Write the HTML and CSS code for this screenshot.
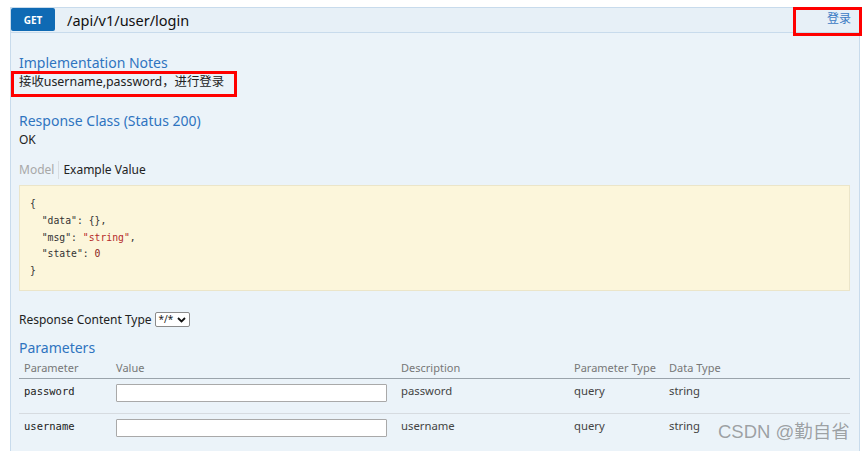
FILE: index.html
```html
<!DOCTYPE html>
<html lang="zh-CN">
<head>
<meta charset="utf-8">
<title>/api/v1/user/login</title>
<link rel="stylesheet" href="styles.css">
</head>
<body>
<div class="op">
  <div class="heading">
    <span class="method">GET</span>
    <span class="path">/api/v1/user/login</span>
    <a class="summary">登录</a>
  </div>
  <div class="content">
    <h4 class="h4">Implementation Notes</h4>
    <p class="text notes">接收username,password，进行登录</p>
    <h4 class="h4 gap-lg">Response Class (Status 200)</h4>
    <p class="text">OK</p>
    <div class="tabs"><span class="tab off">Model</span><span class="tab on">Example Value</span></div>
    <pre class="snippet"><span class="line">{</span>
<span class="line">  <span class="k">"data"</span>: {},</span>
<span class="line">  <span class="k">"msg"</span>: <span class="s">"string"</span>,</span>
<span class="line">  <span class="k">"state"</span>: <span class="n">0</span></span>
<span class="line">}</span></pre>
    <div class="rct">Response Content Type <span class="select"><span class="sel-val">*/*</span><svg class="chev" width="9" height="6" viewBox="0 0 9 6"><path d="M1 1 L4.5 4.5 L8 1" fill="none" stroke="#111" stroke-width="1.8"/></svg></span></div>
    <h4 class="h4 gap-sm">Parameters</h4>
    <table class="params">
      <colgroup><col class="c1"><col class="c2"><col class="c3"><col class="c4"><col class="c5"></colgroup>
      <thead>
        <tr><th>Parameter</th><th>Value</th><th>Description</th><th>Parameter Type</th><th>Data Type</th></tr>
      </thead>
      <tbody>
        <tr><td class="code">password</td><td><span class="input"></span></td><td>password</td><td>query</td><td>string</td></tr>
        <tr><td class="code">username</td><td><span class="input"></span></td><td>username</td><td>query</td><td>string</td></tr>
      </tbody>
    </table>
  </div>
  <div class="mark mark-login"></div>
  <div class="mark mark-notes"></div>
</div>
<div class="watermark">CSDN @勤自省</div>
</body>
</html>
```
FILE: styles.css
```css
html, body {
  margin: 0;
  padding: 0;
  background: #fff;
  height: 451px;
  overflow: hidden;
}
body {
  font-family: "Noto Sans", "Noto Sans CJK SC", sans-serif;
  color: #222;
  position: relative;
}
.op {
  position: relative;
  margin: 7px 0 0 10px;
  width: 850px;
}
.heading {
  display: flex;
  align-items: flex-start;
  height: 24px;
  background: #e7f0f7;
  border: 1px solid #c8dbec;
}
.method {
  width: 44px;
  height: 23px;
  line-height: 24px;
  background: #0f6ab4;
  color: #fff;
  font-size: 10px;
  font-weight: bold;
  text-align: center;
  border-radius: 2px;
}
.path {
  margin-left: 12px;
  font-size: 14.5px;
  line-height: 24px;
  color: #111;
}
.summary {
  margin-left: auto;
  margin-right: 8px;
  font-size: 12px;
  line-height: 22px;
  color: #3b7bc4;
}
.content {
  background: #ebf3f9;
  border: 1px solid #c8dbec;
  border-top: none;
  padding: 20px 8px 4px 8px;
}
.h4 {
  margin: 0;
  font-size: 14px;
  line-height: 20px;
  font-weight: normal;
  color: #2f74c0;
}
.gap-lg { margin-top: 20px; }
.gap-sm { margin-top: 8px; }
.text {
  margin: 0;
  font-size: 12px;
  line-height: 18px;
  color: #222;
}
.text.notes { font-size: 12.4px; }
.tabs {
  margin-top: 12px;
  display: flex;
  font-size: 12px;
  line-height: 18px;
}
.tab.off { color: #a8a8a8; padding-right: 4px; }
.tab.on {
  color: #222;
  border-left: 1px solid #d8dde2;
  padding-left: 4px;
}
.snippet {
  margin: 6px 1px 0 0;
  background: #fcf6db;
  border: 1px solid #ebe5c9;
  padding: 10px 10px;
  font-family: "DejaVu Sans Mono", monospace;
  font-size: 9.75px;
  line-height: 16.75px;
  color: #333;
}
.snippet .line { display: inline-block; height: 16.75px; }
.snippet .s { color: #b52a2a; }
.snippet .n { color: #8a1c1c; }
.rct {
  margin-top: 19px;
  font-size: 12px;
  line-height: 20px;
  display: flex;
  align-items: center;
  gap: 3px;
}
.select {
  display: inline-flex;
  align-items: center;
  gap: 4px;
  height: 13px;
  padding: 0 3px 0 3px;
  border: 1px solid #8a8a8a;
  border-radius: 2px;
  background: #fff;
  font-size: 10px;
  line-height: 13px;
}
.chev { display: block; }
.params {
  width: 831px;
  table-layout: fixed;
  border-collapse: collapse;
  font-size: 11.3px;
}
.c1 { width: 92px; }
.c2 { width: 285px; }
.c3 { width: 173px; }
.c4 { width: 95px; }
.c5 { width: 186px; }
.params th {
  text-align: left;
  font-weight: normal;
  color: #777;
  height: 20px;
  line-height: 20px;
  padding: 0 0 0 5px;
  border-bottom: 1px solid #9aa3ab;
  font-size: 11px;
}
.params td {
  vertical-align: top;
  height: 29px;
  padding: 5px 0 0 5px;
  line-height: 14px;
  color: #444;
  border-bottom: 1px solid #d6dbe0;
}
.params tr:last-child td { border-bottom: none; }
.params td.code {
  font-family: "DejaVu Sans Mono", monospace;
  font-size: 10.5px;
  color: #222;
}
.input {
  display: block;
  width: 269px;
  height: 16px;
  background: #fff;
  border: 1px solid #a9a9a9;
  border-radius: 1px;
}
.mark {
  position: absolute;
  border: 3px solid #f00;
  box-sizing: border-box;
}
.mark-login {
  left: 783px;
  top: 0;
  width: 69px;
  height: 29px;
}
.mark-notes {
  left: 1px;
  top: 64px;
  width: 226px;
  height: 26px;
}
.watermark {
  position: absolute;
  left: 718px;
  top: 420px;
  font-family: "Liberation Sans", "Noto Sans CJK SC", sans-serif;
  font-size: 18.5px;
  line-height: 24px;
  color: rgba(90, 90, 90, 0.55);
}
```
